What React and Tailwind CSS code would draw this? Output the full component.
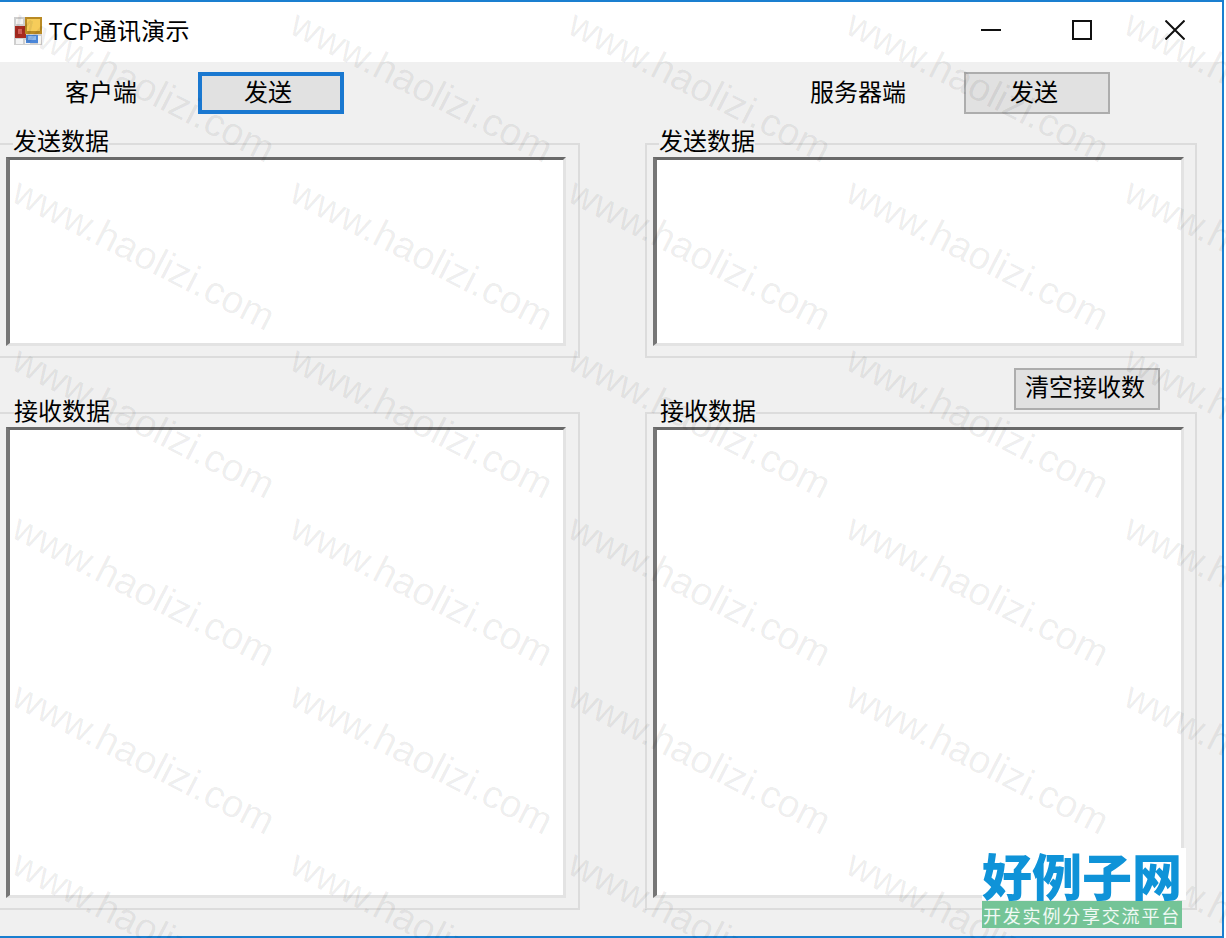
import React from 'react';

const FONT = "font-['Noto_Sans_CJK_SC','Noto_Sans',sans-serif]";

const WATERMARK_COLS = [-134, 144, 422, 700, 978, 1256];
const WATERMARK_ROWS = [86, 254, 422, 590, 758, 926];

const AppIcon = () => (
  <svg width="30" height="30" viewBox="0 0 30 30" className="mt-[2px] shrink-0">
    <rect x="1" y="1" width="28" height="28" fill="#cfcfcf" />
    <rect x="3" y="3" width="7" height="5" fill="#f4f4f4" />
    <rect x="3" y="23" width="7" height="5" fill="#f4f4f4" />
    <rect x="12" y="24" width="5" height="4" fill="#f4f4f4" />
    <rect x="25" y="20" width="3" height="8" fill="#f4f4f4" />
    <rect x="2" y="10" width="11" height="12" fill="#a82a20" />
    <rect x="5" y="13" width="4" height="5" fill="#d8605a" />
    <rect x="12" y="1" width="17" height="17" fill="#b98a24" />
    <rect x="14" y="3" width="13" height="12" fill="#f6cc5a" />
    <rect x="13" y="19" width="12" height="8" fill="#4a86d8" />
    <rect x="15" y="20" width="8" height="4" fill="#8db8ee" />
  </svg>
);

const WindowControls = () => (
  <div className="ml-auto flex items-center">
    <svg width="20" height="20" viewBox="0 0 20 20" className="mr-[71px]">
      <path d="M0 10h20" stroke="#111" strokeWidth="2" />
    </svg>
    <svg width="20" height="20" viewBox="0 0 20 20" className="mr-[73px]">
      <rect x="1" y="1" width="18" height="18" fill="none" stroke="#111" strokeWidth="2" />
    </svg>
    <svg width="20" height="20" viewBox="0 0 20 20" className="mr-[37px]">
      <path d="M0.5 0.5l19 19M19.5 0.5l-19 19" stroke="#111" strokeWidth="2" />
    </svg>
  </div>
);

const GroupBox = ({ title, titleClass, height, paddingClass, borderClass }) => (
  <div className={`relative flex ${height} ${paddingClass} ${borderClass} border-[#dcdcdc]`}>
    <span className={`absolute ${titleClass} bg-[#f0f0f0] text-[24px] leading-[28px] text-black`}>
      {title}
    </span>
    <div className="flex-1 border-[3px] border-l-4 border-t-[#696969] border-l-[#767676] border-r-[#e3e3e3] border-b-[#e3e3e3] bg-white" />
  </div>
);

const SendButton = ({ focused, label = '发送', nudgeClass = 'pr-[6px] pb-[4px]' }) => (
  <button
    className={`flex h-[42px] w-[146px] items-center justify-center bg-[#e1e1e1] text-[24px] text-black ${nudgeClass} ${
      focused ? 'border-[4px] border-[#1a78d0]' : 'border-2 border-[#adadad]'
    }`}
  >
    {label}
  </button>
);

const Watermark = () => (
  <div className="pointer-events-none absolute inset-0 overflow-hidden">
    {WATERMARK_ROWS.map((top) =>
      WATERMARK_COLS.map((left) => (
        <span
          key={`${left}-${top}`}
          className="absolute -translate-x-1/2 -translate-y-1/2 rotate-[27deg] whitespace-nowrap font-['Liberation_Sans',sans-serif] text-[39px] leading-none text-black/[0.07]"
          style={{ left, top }}
        >
          www.haolizi.com
        </span>
      ))
    )}
  </div>
);

const Logo = () => (
  <div className="absolute left-[982px] top-[848px] flex w-[204px] flex-col">
    <div className="flex h-[52px] items-center bg-white text-[50px] leading-none font-black text-[#0f93d8]">
      好例子网
    </div>
    <div className="mt-[1px] flex h-[27px] w-[200px] items-center justify-center bg-[#74c497] text-[18px] leading-none tracking-[1.8px] whitespace-nowrap text-white/90">
      开发实例分享交流平台
    </div>
  </div>
);

export default function App() {
  return (
    <div className={`relative h-[938px] w-[1226px] bg-white ${FONT}`}>
      <div className="flex h-[938px] w-[1224px] flex-col border-t-2 border-r-2 border-b-2 border-[#1a7fd0]">
        {/* title bar */}
        <div className="flex h-[60px] items-center bg-white pl-[13px] pb-[4px]">
          <AppIcon />
          <span className="mt-[2px] ml-[6px] font-['Open_Sans','Noto_Sans_CJK_SC',sans-serif] text-[24px] tracking-[0.3px] text-black">
            TCP通讯演示
          </span>
          <WindowControls />
        </div>

        {/* client area */}
        <div className="flex flex-1 bg-[#f0f0f0]">
          <div className="w-[580px]">
            <div className="flex h-[81px] items-start pt-[10px]">
              <span className="ml-[65px] w-[133px] text-[24px] leading-[38px] text-black">客户端</span>
              <SendButton focused />
            </div>
            <GroupBox
              title="发送数据"
              titleClass="top-[-19px] left-[13px]"
              height="h-[215px]"
              paddingClass="pt-[12px] pr-[12px] pb-[10px] pl-[6px]"
              borderClass="border-t-2 border-r-2 border-b-2"
            />
            <div className="h-[54px]" />
            <GroupBox
              title="接收数据"
              titleClass="top-[-18px] left-[14px]"
              height="h-[498px]"
              paddingClass="pt-[13px] pr-[12px] pb-[10px] pl-[6px]"
              borderClass="border-t-2 border-r-2 border-b-2"
            />
          </div>

          <div className="ml-[65px] w-[552px]">
            <div className="flex h-[81px] items-start pt-[10px]">
              <span className="ml-[165px] w-[154px] text-[24px] leading-[38px] text-black">服务器端</span>
              <SendButton />
            </div>
            <GroupBox
              title="发送数据"
              titleClass="top-[-19px] left-[12px]"
              height="h-[215px]"
              paddingClass="pt-[12px] pr-[11px] pb-[10px] pl-[6px]"
              borderClass="border-2"
            />
            <div className="h-[54px] pt-[10px] pl-[369px]">
              <SendButton label="清空接收数" nudgeClass="pr-[4px] pb-[6px]" />
            </div>
            <GroupBox
              title="接收数据"
              titleClass="top-[-18px] left-[13px]"
              height="h-[498px]"
              paddingClass="pt-[13px] pr-[11px] pb-[10px] pl-[6px]"
              borderClass="border-2"
            />
          </div>
        </div>
      </div>
      <Watermark />
      <Logo />
    </div>
  );
}
